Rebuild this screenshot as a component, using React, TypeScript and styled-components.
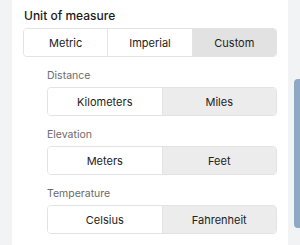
import React, { useState } from 'react';
import styled, { createGlobalStyle } from 'styled-components';

const GlobalStyle = createGlobalStyle`
  html, body {
    margin: 0;
    padding: 0;
    background: #f2f3f5;
    overflow: hidden;
  }
  * {
    box-sizing: border-box;
  }
`;

export const Screen = styled.div`
  display: flex;
  height: 245px;
  width: 300px;
  font-family: Inter, 'Noto Sans', sans-serif;
`;

export const Card = styled.div`
  margin-left: 12px;
  width: 276px;
  height: 100%;
  background: #ffffff;
  padding: 8px 11px 0;
`;

export const Track = styled.div`
  flex: 1;
  padding: 79px 0 0 6px;
`;

export const Thumb = styled.div`
  height: 149px;
  background: #8fa9c3;
  border-radius: 4px 0 0 4px;
`;

export const Title = styled.h3`
  margin: 0 0 5px;
  padding-left: 1px;
  font-size: 12px;
  line-height: 15px;
  font-weight: 450;
  color: #1a1a1a;
`;

export const Section = styled.div`
  padding-left: 24px;
  margin-top: 12px;
`;

export const Label = styled.div`
  font-size: 10.5px;
  line-height: 13px;
  color: #6b6b6b;
  margin-bottom: 5px;
`;

export const Segmented = styled.div`
  display: flex;
  height: 29px;
  border: 1px solid #e3e3e3;
  border-radius: 4px;
  overflow: hidden;
`;

export const Segment = styled.button<{ active: boolean; tone: string }>`
  flex: 1;
  border: none;
  margin: 0;
  padding: 0;
  border-left: 1px solid #e4e4e4;
  background: ${(props) => (props.active ? props.tone : '#ffffff')};
  font-family: inherit;
  font-size: 11px;
  color: #222222;
  cursor: pointer;
  &:first-child {
    border-left: none;
  }
`;

interface IGroup {
  options: string[];
  selected: number;
  tone: string;
}

const Group = ({ options, selected, tone }: IGroup) => {
  const [value, setValue] = useState(selected);
  return (
    <Segmented>
      {options.map((option, index) => (
        <Segment
          key={option}
          active={index === value}
          tone={tone}
          onClick={() => setValue(index)}
        >
          {option}
        </Segment>
      ))}
    </Segmented>
  );
};

const subUnits = [
  { label: 'Distance', options: ['Kilometers', 'Miles'] },
  { label: 'Elevation', options: ['Meters', 'Feet'] },
  { label: 'Temperature', options: ['Celsius', 'Fahrenheit'] },
];

const App = () => {
  return (
    <Screen>
      <GlobalStyle />
      <Card>
        <Title>Unit of measure</Title>
        <Group
          options={['Metric', 'Imperial', 'Custom']}
          selected={2}
          tone="#e2e2e2"
        />
        {subUnits.map((unit) => (
          <Section key={unit.label}>
            <Label>{unit.label}</Label>
            <Group options={unit.options} selected={1} tone="#ececec" />
          </Section>
        ))}
      </Card>
      <Track>
        <Thumb />
      </Track>
    </Screen>
  );
};

export default App;
